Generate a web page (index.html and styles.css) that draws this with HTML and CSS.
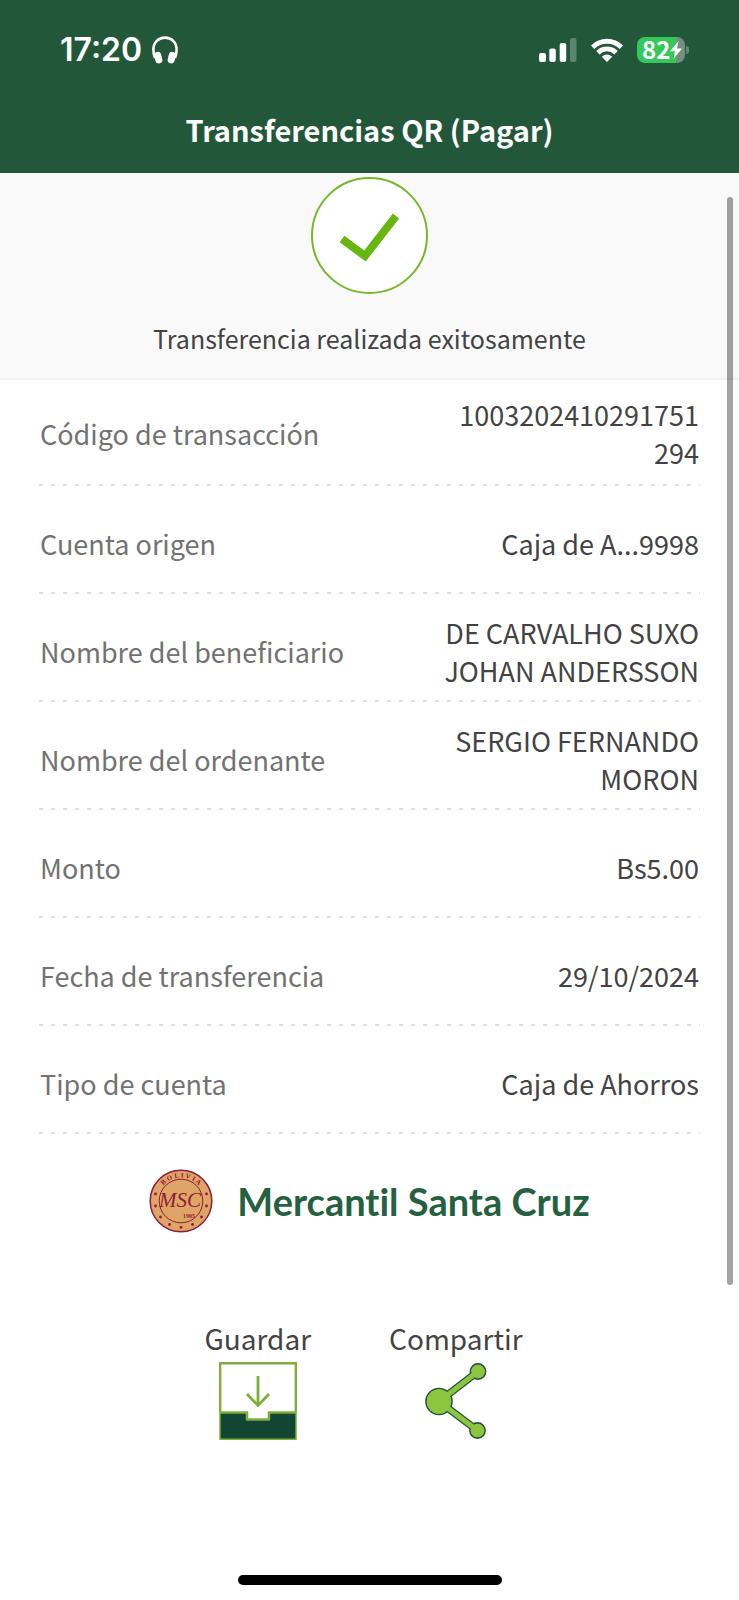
FILE: index.html
```html
<!DOCTYPE html>
<html lang="es">
<head>
<meta charset="utf-8">
<meta name="viewport" content="width=device-width, initial-scale=1">
<title>Transferencias QR (Pagar)</title>
<link rel="stylesheet" href="styles.css">
</head>
<body>
<div class="screen">
  <header class="header">
    <div class="status">
      <div class="status-left">
        <span class="clock">17:20</span>
        <svg class="headphones" viewBox="0 0 26 28" width="26" height="28" aria-hidden="true">
          <path d="M3 22C1.600 19 1.400 16 1.400 13.500C1.400 6.500 6.500 1.600 13 1.600S24.600 6.500 24.600 13.500C24.600 16 24.400 19 23 22" fill="none" stroke="#fff" stroke-width="2.600"/>
          <rect x="2.800" y="15.800" width="7" height="11.600" rx="3.200" fill="#fff" transform="rotate(-14 6.200 21.800)"/>
          <rect x="16.200" y="15.800" width="7" height="11.600" rx="3.200" fill="#fff" transform="rotate(14 19.800 21.800)"/>
        </svg>
      </div>
      <div class="status-right">
        <svg viewBox="0 0 38 24" width="38" height="24" aria-hidden="true" fill="#fff">
          <rect x="0" y="15" width="7" height="9" rx="2"/>
          <rect x="10.300" y="10.500" width="6.500" height="13.500" rx="2"/>
          <rect x="20.700" y="5" width="6.500" height="19" rx="2"/>
          <rect x="31" y="0" width="6.500" height="24" rx="2" opacity=".27"/>
        </svg>
        <svg viewBox="0 0 32 24" width="32" height="24" aria-hidden="true">
          <g fill="none" stroke="#fff" stroke-width="4.800">
            <path d="M1.600 9.200a20.400 20.400 0 0 1 28.800 0"/>
            <path d="M6.900 14.700a12.900 12.900 0 0 1 18.200 0"/>
          </g>
          <path d="M10.800 18.700a7.400 7.400 0 0 1 10.400 0L16 24z" fill="#fff"/>
        </svg>
        <div class="battery">
          <span class="battery-level">82</span>
          <svg viewBox="0 0 12 18" width="12" height="18" aria-hidden="true"><path d="M8.500 0L0 10.300h5L3.500 18L12 7.500H7z" fill="#fff"/></svg>
        </div>
      </div>
    </div>
    <h1 class="title">Transferencias QR (Pagar)</h1>
  </header>

  <main class="content">
    <section class="hero">
      <svg class="check" viewBox="0 0 117 117" width="117" height="117" aria-hidden="true">
        <circle cx="58.500" cy="58.500" r="57.500" fill="#fff" stroke="#76b82a" stroke-width="2"/>
        <path d="M31 62L54 79L85 39" fill="none" stroke="#67b70f" stroke-width="8"/>
      </svg>
      <p class="message">Transferencia realizada exitosamente</p>
    </section>

    <dl class="details">
      <div class="row"><dt>Código de transacción</dt><dd>1003202410291751<wbr>294</dd></div>
      <div class="row"><dt>Cuenta origen</dt><dd>Caja de A...9998</dd></div>
      <div class="row"><dt>Nombre del beneficiario</dt><dd>DE CARVALHO SUXO JOHAN ANDERSSON</dd></div>
      <div class="row"><dt>Nombre del ordenante</dt><dd>SERGIO FERNANDO MORON</dd></div>
      <div class="row"><dt>Monto</dt><dd>Bs5.00</dd></div>
      <div class="row"><dt>Fecha de transferencia</dt><dd>29/10/2024</dd></div>
      <div class="row"><dt>Tipo de cuenta</dt><dd>Caja de Ahorros</dd></div>
    </dl>

    <div class="brand">
      <svg viewBox="0 0 64 64" width="64" height="64" aria-hidden="true">
        <defs><path id="arc" d="M8.500 32a23.500 23.500 0 0 1 47 0"/></defs>
        <circle cx="32" cy="32" r="30.800" fill="#dfa566" stroke="#8e1c3c" stroke-width="1.500"/>
        <circle cx="32" cy="32" r="21.800" fill="none" stroke="#8e1c3c"/>
        <g fill="#8e1c3c">
          <text class="seal-arc"><textPath href="#arc" startOffset="50%" text-anchor="middle">B O L I V I A</textPath></text>
          <text class="seal-letters" x="31" y="38" text-anchor="middle">MSC</text>
          <text class="seal-year" x="34" y="49">1905</text>
          <circle cx="6.500" cy="25" r="1.400"/><circle cx="57.500" cy="25" r="1.400"/>
          <circle cx="6.500" cy="37" r="1.400"/><circle cx="57.500" cy="37" r="1.400"/>
          <circle cx="11.500" cy="48" r="1.400"/><circle cx="52.500" cy="48" r="1.400"/>
          <circle cx="20.500" cy="55.500" r="1.400"/><circle cx="43.500" cy="55.500" r="1.400"/>
          <circle cx="32" cy="58.300" r="1.400"/>
        </g>
      </svg>
      <span class="brand-name">Mercantil Santa Cruz</span>
    </div>

    <div class="actions">
      <button class="action" type="button">
        <span>Guardar</span>
        <svg viewBox="0 0 78 78" width="78" height="78" aria-hidden="true">
          <path d="M1 50H27V57H51V50H77V77H1z" fill="#114632"/>
          <path d="M1.200 50V1.200H76.800V50" fill="#fff" stroke="#7fae3c" stroke-width="2.400"/>
          <path d="M1 50V77.200H77V50" fill="none" stroke="#7fae3c" stroke-width="1.500"/>
          <path d="M1 50.500H28V57.500H50V50.500H77" fill="#fff" stroke="#7fae3c" stroke-width="2.600" stroke-linejoin="round"/>
          <path d="M39 14V43M28 32L39 43.500L50 32" fill="none" stroke="#7fae3c" stroke-width="2.800"/>
        </svg>
      </button>
      <button class="action" type="button">
        <span>Compartir</span>
        <svg viewBox="0 0 62 78" width="62" height="78" aria-hidden="true">
          <g fill="#8cc63f" stroke="#24523a" stroke-width="1.600">
            <circle cx="14" cy="39.500" r="13"/><circle cx="53" cy="9.500" r="7.600"/><circle cx="52.500" cy="68.500" r="7.600"/>
          </g>
          <path d="M14 39.500L53 9.500M14 39.500L52.500 68.500" stroke="#24523a" stroke-width="7.600"/>
          <path d="M14 39.500L53 9.500M14 39.500L52.500 68.500" stroke="#8cc63f" stroke-width="5.200"/>
          <g fill="#8cc63f"><circle cx="14" cy="39.500" r="12.200"/><circle cx="53" cy="9.500" r="6.800"/><circle cx="52.500" cy="68.500" r="6.800"/></g>
        </svg>
      </button>
    </div>
    <div class="scrollbar"></div>
  </main>

  <div class="home-bar"></div>
</div>
</body>
</html>
```
FILE: styles.css
```css
* { box-sizing: border-box; }

body {
  margin: 0;
  background: #fff;
  color: #434343;
  font-family: "Noto Sans CJK SC", "Noto Sans", sans-serif;
}

.screen {
  position: relative;
  display: flex;
  flex-direction: column;
  min-height: 100vh;
  padding-bottom: 15px;
}

.header {
  background: #22573a;
  color: #fff;
}

.status {
  display: flex;
  justify-content: space-between;
  align-items: center;
  height: 100px;
  padding: 0 54px 0 60px;
}

.status-left {
  display: flex;
  align-items: center;
  gap: 10px;
}

.clock {
  font: 600 32px/40px Inter, sans-serif;
}

.status-right {
  display: flex;
  align-items: center;
  gap: 14px;
}

.battery {
  position: relative;
  display: flex;
  align-items: center;
  width: 48px;
  height: 26px;
  padding-left: 5px;
  border-radius: 8px;
  background: linear-gradient(90deg, #34c759 82%, #748f80 82%);
}

.battery::after {
  content: "";
  position: absolute;
  right: -4px;
  top: 9px;
  width: 3px;
  height: 8px;
  border-radius: 0 3px 3px 0;
  background: #648974;
}

.battery-level {
  font: 700 24px/24px "Noto Sans CJK SC", sans-serif;
  padding-bottom: 2px;
}

.title {
  margin: 0;
  height: 73px;
  font-size: 29px;
  font-weight: 700;
  line-height: 59px;
  text-align: center;
}

.content {
  position: relative;
  flex: 1;
}

.hero {
  display: flex;
  flex-direction: column;
  align-items: center;
  gap: 25px;
  padding: 4px 20px 21px;
  background: #f9f9f9;
  border-bottom: 2px solid #f0f0f0;
}

.check { display: block; }

.message {
  margin: 0;
  font-size: 25px;
  line-height: 38px;
}

.details {
  margin: 0;
  padding: 0 39px;
}

.row {
  display: flex;
  justify-content: space-between;
  align-items: center;
  min-height: 108px;
  padding: 20px 1px 12px;
  font-size: 27px;
  line-height: 38px;
  background: repeating-linear-gradient(90deg, #dedede 0 4px, transparent 4px 12px) left bottom / 100% 2px no-repeat;
}

.row:first-child {
  min-height: 106px;
  padding: 16px 1px 14px;
}

.row dt { color: #727272; }

.row dd {
  width: 40%;
  margin: 0;
  text-align: right;
}

.brand {
  display: flex;
  justify-content: center;
  align-items: center;
  gap: 24px;
  padding-top: 35px;
}

.brand-name {
  color: #256140;
  font: 700 38px/48px Lato, sans-serif;
  font-variant-ligatures: none;
}

.seal-arc { font: 700 7px "Liberation Serif", serif; }
.seal-letters { font: italic 21px "Liberation Serif", serif; }
.seal-year { font: 700 6px "Liberation Serif", serif; }

.actions {
  display: flex;
  justify-content: center;
  gap: 78px;
  padding: 85px 12px 0 0;
}

.action {
  display: flex;
  flex-direction: column;
  align-items: center;
  gap: 4px;
  padding: 0;
  border: 0;
  background: none;
  color: inherit;
  font: inherit;
  font-size: 28px;
  line-height: 40px;
}

.scrollbar {
  position: absolute;
  top: 24px;
  right: 6px;
  bottom: 290px;
  width: 6px;
  border-radius: 3px;
  background: rgba(0, 0, 0, .36);
}

.home-bar {
  align-self: center;
  width: 264px;
  height: 10px;
  border-radius: 5px;
  background: #000;
}
```
